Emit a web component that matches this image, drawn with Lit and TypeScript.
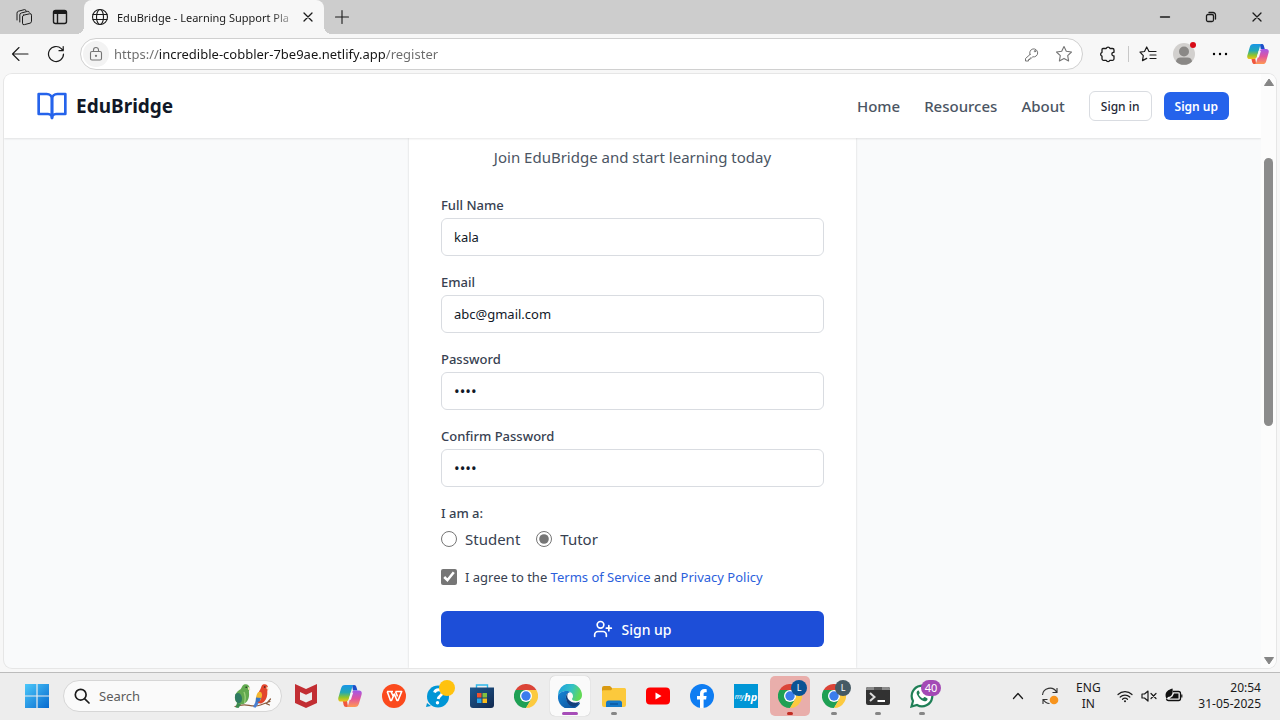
import { LitElement, html, css, svg } from "lit";
import { customElement, state } from "lit/decorators.js";
import { classMap } from "lit/directives/class-map.js";

const stroke = (size: number, body: unknown, width = 1, box = size) => html`<svg
  width=${size} height=${size} viewBox="0 0 ${box} ${box}" fill="none"
  stroke="currentColor" stroke-width=${width} stroke-linecap="round" stroke-linejoin="round"
  aria-hidden="true">${body}</svg>`;

const art = (size: number, body: unknown, box = 24) => html`<svg
  width=${size} height=${size} viewBox="0 0 ${box} ${box}" aria-hidden="true">${body}</svg>`;

const workspaces = stroke(18, svg`
  <path d="M8.500 7.200l6-1.400a1.500 1.500 0 0 1 2 1.400v6a2 2 0 0 1-1.500 2l-5.500 1.400a1.500 1.500 0 0 1-2-1.400V9a1.800 1.800 0 0 1 1-1.800z"/>
  <path d="M4.800 14V7a2 2 0 0 1 1.500-2l6.500-1.700a1.300 1.300 0 0 1 1.500 1M2 12V5.200a2 2 0 0 1 1.500-2l6-1.600a1.300 1.300 0 0 1 1.500 1"/>`);
const tabActions = stroke(18, svg`
  <rect x="2.500" y="2.500" width="13" height="13" rx="2"/><path d="M3.500 4.500h11" stroke-width="3"/><path d="M6.500 5v10" />`, 1.4);
const globe = stroke(18, svg`
  <circle cx="9" cy="9" r="7.500"/><ellipse cx="9" cy="9" rx="3.500" ry="7.500"/><path d="M2 6.500h14M2 11.500h14"/>`, 1.1);
const cross = stroke(12, svg`<path d="M2 2l8 8M10 2l-8 8"/>`, 1.3);
const plus = stroke(16, svg`<path d="M8 1.500v13M1.500 8h13"/>`, 1.1);
const minimize = stroke(12, svg`<path d="M1.500 6h9"/>`, 1.4);
const restore = stroke(12, svg`<rect x="1.500" y="3.500" width="7" height="7" rx="1.500"/><path d="M4 1.500h4a2.500 2.500 0 0 1 2.500 2.500v4"/>`, 1.3);
const back = stroke(18, svg`<path d="M17 9H1.500M8 2.500L1.500 9 8 15.500"/>`, 1.1);
const reload = stroke(18, svg`<path d="M16.500 9a7.500 7.500 0 1 1-2.200-5.300L16 5.500M16.200 1.500v4.200H12"/>`, 1.2);
const lock = stroke(16, svg`<rect x="2.500" y="5.500" width="11" height="8.500" rx="1.500"/><path d="M5.500 5.500V4a2.500 2.500 0 0 1 5 0v1.500"/><circle cx="8" cy="9.800" r=".6" fill="currentColor"/>`, 1.1);
const key = stroke(16, svg`<path d="M6 8.500a4 4 0 1 1 2.800 2.300L7.500 12H6v1.500H4.500V15H1.500v-2.500L6 8.500z"/><circle cx="11" cy="5.200" r=".7"/>`);
const star = stroke(18, svg`<path d="M9 1.500l2.300 4.800 5.200.7-3.800 3.600.9 5.300L9 13.400l-4.600 2.500.9-5.300L1.500 7l5.200-.7z"/>`, 1.1);
const puzzle = stroke(18, svg`<path d="M4 3.500h3.200a2 2 0 0 1 3.800 0h2.500a1.500 1.500 0 0 1 1.500 1.500v2.300h-.8a1.800 1.800 0 0 0 0 3.500h.8v3a1.500 1.500 0 0 1-1.500 1.500h-2.600a2 2 0 0 1-3.700 0H4.500A1.500 1.500 0 0 1 3 13.800v-2.700a2 2 0 0 1 0-3.800V4.500a1 1 0 0 1 1-1z"/>`, 1.3);
const favourites = stroke(18, svg`<path d="M10 6.500L7.700 2 5.500 6.500l-4.500.7 3.300 3.400-.8 5 4.200-2.200M10.500 6.500h6.500M11 10h6M11 13.500h6"/>`, 1.2);
const dots = art(18, svg`<circle cx="3" cy="9" r="1.200"/><circle cx="9" cy="9" r="1.200"/><circle cx="15" cy="9" r="1.200"/>`, 18);
const avatar = art(22, svg`<circle cx="11" cy="11" r="11" fill="#d2d0ce"/><circle cx="11" cy="8.500" r="5" fill="#8a8886"/><path d="M3 18.400q.5-4 4.500-4h7q4 0 4.500 4a11 11 0 0 1-16 0z" fill="#8a8886"/>`, 22);
const book = stroke(32, svg`<path d="M2 3h6a4 4 0 0 1 4 4v14a3 3 0 0 0-3-3H2z"/><path d="M22 3h-6a4 4 0 0 0-4 4v14a3 3 0 0 1 3-3h7z"/>`, 2, 24);
const userPlus = stroke(20, svg`<path d="M16 21v-2a4 4 0 0 0-4-4H6a4 4 0 0 0-4 4v2"/><circle cx="9" cy="7" r="4"/><path d="M19 8v6M22 11h-6"/>`, 2, 24);
const magnifier = stroke(16, svg`<circle cx="6.700" cy="6.700" r="5.400"/><path d="M10.800 10.800L15 15"/>`, 1.700);

const copilot = (size: number, id: string) => art(size, svg`
  <defs>
    <linearGradient id="${id}a" x1="0" y1="0" x2="0" y2="1"><stop offset="0" stop-color="#1995e8"/><stop offset=".45" stop-color="#22a9b5"/><stop offset=".75" stop-color="#8fc52d"/><stop offset="1" stop-color="#f3c21a"/></linearGradient>
    <linearGradient id="${id}b" x1="0" y1="0" x2="0" y2="1"><stop offset="0" stop-color="#a158ea"/><stop offset=".5" stop-color="#e2559b"/><stop offset="1" stop-color="#ff9a52"/></linearGradient>
  </defs>
  <path d="M14 1h2.200c1.200 0 1.800.7 2.200 2l1 3.500H15z" fill="#1d4fc9"/>
  <path d="M10 23H8c-1.200 0-2-.8-2.400-2.200L4.800 17H9z" fill="#f0563d"/>
  <path d="M7 1h9c-1.200.4-1.600 1.500-2 3l-3 10.500C10.400 16.600 9.500 17.500 7.500 17.500H3C.8 17.500-.2 16 .4 13.600L3 4.500C3.700 2 4.800 1 7 1z" fill="url(#${id}a)"/>
  <path d="M17 23H8.500c1.200-.4 1.600-1.500 2-3l3-10.500c.6-2.100 1.500-3 3.500-3h4c2.200 0 3.200 1.500 2.600 3.900L21 19.500c-.7 2.500-1.800 3.500-4 3.500z" fill="url(#${id}b)"/>
  <path d="M12.800 8.500h2.400l-2.300 7.200h-2.300z" fill="#f7f7f7"/>`);

const windowsLogo = art(24, svg`
  <defs><linearGradient id="win" x1="0" y1="0" x2="1" y2="1"><stop offset="0" stop-color="#4cc8fa"/><stop offset="1" stop-color="#0669cf"/></linearGradient></defs>
  <path d="M0 0h11.400v11.400H0zM12.600 0H24v11.400H12.600zM0 12.600h11.400V24H0zM12.600 12.600H24V24H12.600z" fill="url(#win)"/>`);

const parrots = html`<svg width="40" height="26" viewBox="0 0 40 26" aria-hidden="true">
  <path d="M2 23.500q7-2.500 14-1.200t11.500-.3 9.500-3.500M33 20.500l3.500 1.500M34 20l3.500-4" stroke="#8a5a3c" stroke-width="1.200" fill="none" stroke-linecap="round"/>
  <path d="M5 17l-2.500 7.500 3 .5 4-6z" fill="#3b8b4e"/>
  <path d="M11 1.500c3-1.200 5.800.8 5.500 4-.2 1.500-.8 2-.5 4.500.6 5-1.500 9.500-5.500 11-4 1-8-1-8.500-5C1.300 11.500 4 8 7.500 6.200 9 5 8.800 2.500 11 1.500z" fill="#62a94f"/>
  <path d="M2.500 11c3-2.500 6 0 6.500 4 .3 3-1 5-3 5.500-3-.8-5-4.500-3.500-9.500z" fill="#2f7a62"/>
  <path d="M11 9c1.500 3 1.500 7 .5 11" stroke="#9bd07a" stroke-width="1.300" fill="none"/>
  <path d="M15 4q2.800.5 2 3.500l-2-1z" fill="#efe0bb"/><circle cx="13.200" cy="4.200" r=".8" fill="#1d2a1d"/>
  <path d="M24.500 15l-4.500 9 2.500.8 5-7z" fill="#4a7fd0"/>
  <path d="M30 1.500c3-1 5.500.8 5 4-.3 1.500-.8 2-.7 4 .2 5.500-2.300 9.500-6 11-2.500.5-4.300-1-4.300-4 0-4.500 2-8 3.500-10.500.8-1.500.8-3.800 2.500-4.500z" fill="#e2452c"/>
  <path d="M24.500 10c2-2.500 5-1 4.500 3l-1.500 4.500-4.500.5c-.4-3 .3-6 1.500-8z" fill="#f4b62f"/>
  <path d="M23 14.500l5 .5-1.500 3.500-4 1z" fill="#3974c4"/>
  <path d="M33.500 3.500q2.800.5 2 3.500l-2-1z" fill="#f5e7c6"/><circle cx="31.700" cy="4" r=".8" fill="#2a1d1d"/></svg>`;

const mcafee = art(24, svg`<path d="M1 0l11 5 11-5v19l-11 5-11-5z" fill="#c22e33"/><path d="M6 8l6 2.700L18 8v7.700l-6 2.800-6-2.800z" fill="#ededed"/>`);
const wps = art(24, svg`<circle cx="12" cy="12" r="12" fill="#fb4a1d"/><path d="M5 7.500h6M5.200 7.500l3.300 9h1l2.800-6.500 2.700 6.500h1l3.700-9h-6.200M9 7.500l2.300 5M13.500 7.500l2 5" fill="none" stroke="#fff" stroke-width="1.600" stroke-linejoin="round"/>`);
const help = art(24, svg`<circle cx="12" cy="12.500" r="11" fill="#0096d6"/><path d="M1 19l-1 4 5-1z" fill="#0096d6"/><path d="M8.500 8.500q1-3 4.500-2.700t3 3.500c-.3 2.500-3.500 2.500-3.800 5.700" fill="none" stroke="#fff" stroke-width="2.800"/><circle cx="11.500" cy="18.800" r="1.700" fill="#fff"/>`);
const store = art(24, svg`<defs><linearGradient id="sto" x1="0" y1="0" x2="1" y2="1"><stop offset="0" stop-color="#1d5a91"/><stop offset="1" stop-color="#12294f"/></linearGradient></defs>
  <path d="M6.500 4V1h11v3" fill="none" stroke="#2db7ea" stroke-width="1.400"/><path d="M0 3.500h24V21a3 3 0 0 1-3 3H3a3 3 0 0 1-3-3z" fill="url(#sto)"/>
  <path d="M7 9h4.500v4.500H7z" fill="#f1512b"/><path d="M12.500 9H17v4.500h-4.500z" fill="#80c040"/><path d="M7 14.500h4.500V19H7z" fill="#2aa5ea"/><path d="M12.500 14.500H17V19h-4.500z" fill="#fbbc1b"/>`);
const chrome = art(24, svg`<path d="M12 12L1.600 6A12 12 0 0 1 22.400 6z" fill="#db4437"/><path d="M12 12L1.600 6A12 12 0 0 0 12 24l5.500-9z" fill="#1fa054"/><path d="M12 12l5.200 3L12 24A12 12 0 0 0 22.400 6H12z" fill="#fcca3f"/><path d="M1.600 6l5.200 9L12 6z" fill="#1fa054"/><circle cx="12" cy="12" r="6" fill="#fff"/><circle cx="12" cy="12" r="4.700" fill="#3b7ded"/>`);
const edge = art(24, svg`<defs>
  <linearGradient id="ed1" x1="0" y1="0" x2="1" y2=".3"><stop offset="0" stop-color="#1b9de2"/><stop offset=".6" stop-color="#35c1c5"/><stop offset="1" stop-color="#62d957"/></linearGradient>
  <linearGradient id="ed2" x1="0" y1="0" x2="1" y2="1"><stop offset="0" stop-color="#1686d6"/><stop offset="1" stop-color="#0d4b94"/></linearGradient></defs>
  <path d="M0 12a12 12 0 0 1 24-1c0 4-3 6-6 6-2.500 0-4-1-4-2 0-.7 1-1 1-2.800C15 9 12 7 8.500 7 4 7 .5 9.500 0 12z" fill="url(#ed1)"/>
  <path d="M0 12C.5 9.200 4 7 8.500 7c1.800 0 3.300.5 4.500 1.300C9.500 8 7.500 11 8 14.500c.7 4 5 6.500 9 6 2-.2 3.500-1 4.500-1.500l.6.600A12 12 0 0 1 0 12z" fill="url(#ed2)"/>
  <path d="M8 14.500c-.3-2.500.6-4.700 2.200-5.700-2.500 4.200.3 8.700 5.300 9.700 2.500.5 5-.3 6.500-1-1.500 3-4 4.800-7 5.300-3.600-1-6.600-4.300-7-8.300z" fill="#123f7c"/>`);
const folder = art(24, svg`<path d="M0 4a2 2 0 0 1 2-2h6l2.500 2.500V9H0z" fill="#d99a12"/><path d="M0 7.500q0-1.200 1.500-1.200H9L11 4h11.500Q24 4 24 5.500V21a2 2 0 0 1-2 2H2a2 2 0 0 1-2-2z" fill="#fcc93c"/><path d="M4 23v-4a2.500 2.500 0 0 1 2.500-2.500h11A2.500 2.500 0 0 1 20 19v4z" fill="#1579c8"/><path d="M8 20h8" stroke="#0b4f94" stroke-width="1.200"/>`);
const youtube = art(24, svg`<rect y="3.500" width="24" height="17" rx="4" fill="#f00"/><path d="M9.500 8.500v7l6-3.500z" fill="#fff"/>`);
const facebook = art(24, svg`<circle cx="12" cy="12" r="12" fill="#0f7df2"/><path d="M10 24v-8.500H7V12h3V9.500C10 6.500 11.800 5 14.400 5c1.200 0 2.300.2 2.300.2v3h-1.300c-1.300 0-1.800.8-1.800 1.600V12h3l-.5 3.500h-2.500V24z" fill="#fff"/>`);
const myhp = html`<span class="myhp"><small>my</small>hp</span>`;
const terminal = art(24, svg`<rect y="3" width="24" height="18" rx="2" fill="#323232"/><path d="M0 6V5a2 2 0 0 1 2-2h20a2 2 0 0 1 2 2v1z" fill="#8b8b8b"/><path d="M8 3h8v3H8z" fill="#5a5a5a"/><path d="M4 9l4.500 4L4 17" fill="none" stroke="#ddd" stroke-width="2"/><path d="M11.500 17H19" stroke="#fff" stroke-width="2"/>`);
const whatsapp = art(24, svg`<path d="M1.500 22.500l1.500-5.500a10.300 10.300 0 1 1 4 4z" fill="#fff" stroke="#1f7f56" stroke-width="2.200"/><path d="M8 6.500c-1.500.8-1.700 2.300-1 4 1.300 3 3.500 5.300 6.500 6.500 1.800.7 3.500.2 4-1.500.2-.8 0-1-.4-1.300l-2.200-1.100c-.5-.2-.8 0-1.100.4-.6.800-.9 1-1.500.7-1.500-.8-2.500-1.800-3.300-3.200-.3-.5 0-.8.300-1.200.5-.6.500-.8.3-1.300L8.800 6.800c-.2-.4-.5-.4-.8-.3z" fill="#1f7f56"/>`);

const chevron = stroke(12, svg`<path d="M1.500 8.500L6 3.500l4.500 5"/>`, 1.3);
const sync = html`<svg width="18" height="18" viewBox="0 0 18 18" fill="none" stroke="#333" stroke-width="1.100" aria-hidden="true"><path d="M1.500 8a7.500 7.500 0 0 1 14-3M16 1v4.500h-4.500M8.500 16.500a7.500 7.500 0 0 1-6-3.500M2 17v-4.500h4.500"/><circle cx="13" cy="13" r="4.300" fill="#f7941d" stroke="none"/></svg>`;
const wifi = stroke(16, svg`<path d="M1 6.500a10 10 0 0 1 14 0M3.200 9a7 7 0 0 1 9.600 0M5.500 11.300a3.700 3.700 0 0 1 5 0"/><circle cx="8" cy="13.300" r="1" fill="currentColor" stroke="none"/>`, 1.2);
const mute = stroke(16, svg`<path d="M1 6v4h2.500L7 13V3L3.500 6zM10 5.500l5 5M15 5.500l-5 5"/>`, 1.200);
const battery = art(18, svg`<path d="M8 4.500h5.500a2 2 0 0 1 2 2v5a2 2 0 0 1-2 2H3.500a2 2 0 0 1-2-1.500" fill="none" stroke="#111" stroke-width="1.300"/><path d="M16.200 7.500h1.200v3h-1.200zM9 6.500h4.500v5H4.500L7.500 9.500zM.8 10C-.2 6 2 3 7.500 1.500 8.300 6 7 9.500 3 10l-1.500 2z" fill="#111"/>`, 18);

interface Task { name: string; icon: unknown; mark?: "active" | "running" | "alert"; badge?: string; tone?: string; }

const tasks: Task[] = [
  { name: "McAfee", icon: mcafee },
  { name: "Copilot", icon: copilot(24, "ct") },
  { name: "WPS Office", icon: wps },
  { name: "HP Support", icon: help, badge: "", tone: "yellow" },
  { name: "Microsoft Store", icon: store },
  { name: "Chrome", icon: chrome },
  { name: "Edge", icon: edge, mark: "active" },
  { name: "File Explorer", icon: folder, mark: "running" },
  { name: "YouTube", icon: youtube },
  { name: "Facebook", icon: facebook },
  { name: "myHP", icon: myhp },
  { name: "Chrome profile 1", icon: chrome, mark: "alert", badge: "L", tone: "blue" },
  { name: "Chrome profile 2", icon: chrome, mark: "running", badge: "L", tone: "slate" },
  { name: "Terminal", icon: terminal, mark: "running" },
  { name: "WhatsApp", icon: whatsapp, mark: "running", badge: "40", tone: "purple" },
];

const reset = css`
  :host, *, *::before, *::after { box-sizing: border-box; }
  button, input { font: inherit; color: inherit; margin: 0; }
  button { border: 0; padding: 0; background: none; display: flex; align-items: center; justify-content: center; }
  svg { display: block; flex: none; }
  a { text-decoration: none; }
`;

@customElement("browser-chrome")
class BrowserChrome extends LitElement {
  static styles = [reset, css`
    :host { display: block; background: #f7f7f7; font-size: 11px; color: #1b1b1b; }
    .strip { display: flex; align-items: stretch; height: 34px; background: #cdcdcd; padding-left: 6px; }
    .tool { width: 36px; flex: none; }
    .tab { display: flex; align-items: center; gap: 8px; width: 240px; margin-left: 6px; padding: 0 8px 0 7px; background: #f7f7f7; border-radius: 8px 8px 0 0; position: relative; }
    .tab::before, .tab::after { content: ""; position: absolute; bottom: 0; width: 8px; height: 8px; }
    .tab::before { right: 100%; background: radial-gradient(circle at 0 0, #cdcdcd 8px, #f7f7f7 8px); }
    .tab::after { left: 100%; background: radial-gradient(circle at 100% 0, #cdcdcd 8px, #f7f7f7 8px); }
    .title { flex: 1; white-space: nowrap; -webkit-mask-image: linear-gradient(90deg, #000 88%, transparent 104%); mask-image: linear-gradient(90deg, #000 88%, transparent 104%); }
    .close { width: 16px; }
    .controls { display: flex; margin-left: auto; }
    .controls button { width: 46px; }
    .bar { display: flex; align-items: center; height: 40px; padding: 0 2px; }
    .address { flex: 1; display: flex; align-items: center; height: 32px; margin-left: 6px; padding: 0 2px; border: 1px solid #d0d0d0; border-radius: 16px; background: #fff; color: #757575; }
    .site { width: 26px; height: 26px; border-radius: 50%; background: #f3f3f3; flex: none; }
    .url { flex: 1; min-width: 0; border: 0; outline: 0; padding: 0 0 0 5px; font-size: 13px; color: transparent; background: linear-gradient(90deg, #6b6b6b 50px, #161616 50px, #161616 277px, #6b6b6b 277px); -webkit-background-clip: text; background-clip: text; }
    .address .tool { width: 32px; }
    .actions { display: flex; align-items: center; margin-left: 7px; }
    .divider { width: 1px; height: 16px; background: #c8c8c8; margin: 0 1px 0 2px; }
    .actions .wide { width: 40px; }
    .profile { position: relative; }
    .dot { position: absolute; top: -1px; right: 6px; width: 6px; height: 6px; border-radius: 50%; background: #d80b17; }
  `];

  render() {
    return html`
      <div class="strip">
        <button class="tool" aria-label="Workspaces">${workspaces}</button>
        <button class="tool" aria-label="Tab actions">${tabActions}</button>
        <div class="tab">
          ${globe}<span class="title">EduBridge - Learning Support Pla</span>
          <button class="close" aria-label="Close tab">${cross}</button>
        </div>
        <button class="tool" aria-label="New tab">${plus}</button>
        <div class="controls">
          <button aria-label="Minimize">${minimize}</button>
          <button aria-label="Restore">${restore}</button>
          <button aria-label="Close">${cross}</button>
        </div>
      </div>
      <div class="bar">
        <button class="tool" aria-label="Back">${back}</button>
        <button class="tool" aria-label="Reload">${reload}</button>
        <div class="address">
          <button class="site" aria-label="Site information">${lock}</button>
          <input class="url" aria-label="Address" .value=${"https://incredible-cobbler-7be9ae.netlify.app/register"} />
          <button class="tool" aria-label="Passwords">${key}</button>
          <button class="tool" aria-label="Add to favourites">${star}</button>
        </div>
        <div class="actions">
          <button class="tool" aria-label="Extensions">${puzzle}</button>
          <span class="divider"></span>
          <button class="tool" aria-label="Favourites">${favourites}</button>
          <button class="tool profile" aria-label="Profile">${avatar}<span class="dot"></span></button>
          <button class="tool" aria-label="More">${dots}</button>
          <button class="tool wide" aria-label="Copilot">${copilot(22, "cb")}</button>
        </div>
      </div>`;
  }
}

@customElement("register-page")
class RegisterPage extends LitElement {
  @state() private role = "tutor";

  static styles = [reset, css`
    :host { display: flex; min-height: 0; margin: 0 4px 4px; background: #f9fafb; border-radius: 8px; overflow: hidden; box-shadow: 0 0 0 1px #e6e6e6; color: #374151; }
    .view { flex: 1; display: flex; flex-direction: column; min-width: 0; overflow: hidden; }
    .top { display: flex; align-items: center; justify-content: space-between; height: 64px; flex: none; padding: 0 32px; background: #fff; box-shadow: 0 1px 2px rgba(0, 0, 0, .1); position: relative; }
    .brand { display: flex; align-items: center; gap: 8px; color: #111827; font-size: 19px; font-weight: 700; }
    .brand svg { color: #2563eb; }
    nav { display: flex; align-items: center; gap: 24px; }
    nav a { color: #4b5563; font-size: 15px; font-weight: 500; }
    .auth { display: flex; gap: 12px; align-items: center; font-size: 12px; font-weight: 600; }
    .auth button { height: 28px; padding: 0 11px; border-radius: 6px; }
    .auth .ghost { height: 30px; color: #1f2937; border: 1px solid #d9dce1; background: #fff; font-weight: 500; }
    .auth .solid { color: #fff; background: #2563eb; }
    .card { flex: 1; width: 100%; max-width: 447px; margin: 0 auto; padding: 7px 32px 0; background: #fff; box-shadow: 0 0 2px rgba(0, 0, 0, .16); }
    .lead { margin: 0 0 26px; text-align: center; font-size: 15px; line-height: 24px; color: #4b5563; }
    form { display: flex; flex-direction: column; gap: 16px; font-size: 14px; }
    .field { display: flex; flex-direction: column; gap: 3px; }
    .field label, legend { font-size: 13px; font-weight: 500; line-height: 20px; padding: 0; }
    .field input { height: 38px; width: 100%; padding: 0 12px; border: 1px solid #d9dce1; border-radius: 6px; background: #fff; color: #111827; font-size: 13px; outline: 0; }
    .field input[type="password"] { font-size: 15px; }
    fieldset { border: 0; margin: 0; padding: 0; }
    .roles { display: flex; gap: 16px; padding-top: 4px; }
    .roles label, .terms { display: flex; align-items: center; gap: 8px; }
    .roles label { font-size: 15px; line-height: 24px; }
    .roles input, .terms input { width: 16px; height: 16px; accent-color: #767676; flex: none; }
    .terms { font-size: 13px; line-height: 20px; }
    .terms a { color: #2c5fdc; }
    .submit { gap: 8px; height: 36px; margin-top: 8px; border-radius: 6px; background: #1d4ed8; color: #fff; font-size: 14px; font-weight: 500; }
    .scroll { width: 15px; flex: none; display: flex; flex-direction: column; align-items: center; background: #fcfcfc; padding: 4px 0 3px; }
    .thumb { width: 9px; height: 268px; border-radius: 5px; background: #8b8b8b; margin-top: 72px; margin-bottom: auto; }
  `];

  private field(id: string, label: string, type: string, value: string) {
    return html`<div class="field"><label for=${id}>${label}</label><input id=${id} type=${type} .value=${value} /></div>`;
  }

  private option(id: string, label: string) {
    return html`<label><input type="radio" name="role" .checked=${this.role === id} @change=${() => (this.role = id)} />${label}</label>`;
  }

  render() {
    return html`
      <div class="view">
        <header class="top">
          <a class="brand" href="#">${book}<span>EduBridge</span></a>
          <nav>
            <a href="#">Home</a><a href="#">Resources</a><a href="#">About</a>
            <div class="auth"><button class="ghost">Sign in</button><button class="solid">Sign up</button></div>
          </nav>
        </header>
        <main class="card">
          <p class="lead">Join EduBridge and start learning today</p>
          <form @submit=${(e: Event) => e.preventDefault()}>
            ${this.field("name", "Full Name", "text", "kala")}
            ${this.field("email", "Email", "email", "abc@gmail.com")}
            ${this.field("password", "Password", "password", "abcd")}
            ${this.field("confirm", "Confirm Password", "password", "abcd")}
            <fieldset>
              <legend>I am a:</legend>
              <div class="roles">${this.option("student", "Student")}${this.option("tutor", "Tutor")}</div>
            </fieldset>
            <div class="terms">
              <input id="terms" type="checkbox" checked />
              <label for="terms">I agree to the <a href="#">Terms of Service</a> and <a href="#">Privacy Policy</a></label>
            </div>
            <button class="submit">${userPlus}Sign up</button>
          </form>
        </main>
      </div>
      <div class="scroll" aria-hidden="true">
        <svg width="10" height="8" viewBox="0 0 10 8"><path d="M5 1l4.500 6.500h-9z" fill="#858585" stroke="#858585" stroke-linejoin="round"/></svg>
        <span class="thumb"></span>
        <svg width="10" height="8" viewBox="0 0 10 8"><path d="M5 7L.5.500h9z" fill="#858585" stroke="#858585" stroke-linejoin="round"/></svg>
      </div>`;
  }
}

@customElement("task-bar")
class TaskBar extends LitElement {
  static styles = [reset, css`
    :host { display: flex; align-items: center; height: 48px; padding: 0 19px 0 15px; background: #ededed; box-shadow: inset 0 1px #bcbcbc; color: #1b1b1b; font-size: 12px; }
    .start, .task { width: 44px; height: 40px; flex: none; }
    .search { display: flex; align-items: center; gap: 9px; width: 219px; height: 32px; margin: 0 2px 0 4px; padding: 0 8px 0 10px; border: 1px solid #d6d6d6; border-radius: 16px; background: #fafafa; }
    .search input { flex: 1; min-width: 0; border: 0; outline: 0; padding: 0; background: none; font-size: 13px; }
    .search input::placeholder { color: #5c5c5c; opacity: 1; }
    .task { position: relative; padding: 0 2px; }
    .plate { display: flex; align-items: center; justify-content: center; width: 40px; height: 40px; border-radius: 5px; }
    .active .plate { background: #fafafa; box-shadow: 0 0 1px rgba(0, 0, 0, .3); }
    .alert .plate { background: #e9aeab; }
    .mark { position: absolute; bottom: 1px; left: 50%; width: 6px; height: 3px; margin-left: -3px; border-radius: 2px; background: #868686; }
    .active .mark { width: 16px; margin-left: -8px; background: #a64db8; }
    .alert .mark { background: #c22b22; }
    .badge { position: absolute; top: 4px; right: 5px; min-width: 16px; height: 16px; border-radius: 8px; font-size: 9px; line-height: 16px; color: #fff; text-align: center; }
    .yellow { background: #ffc20e; }
    .blue { background: #0b5394; }
    .slate { background: #455a64; }
    .purple { background: #a349b5; font-size: 11px; min-width: 20px; right: 3px; }
    .myhp { display: flex; align-items: center; justify-content: center; width: 24px; height: 24px; background: #0096d6; color: #fff; font-size: 11px; font-weight: 700; font-style: italic; }
    .myhp small { font-size: 7px; font-weight: 400; }
    .tray { display: flex; align-items: center; margin-left: auto; }
    .tray button { width: 32px; height: 40px; }
    .tray .lang { display: block; width: 44px; line-height: 16px; }
    .tray .quick { width: 80px; gap: 8px; }
    .clock { line-height: 16px; text-align: right; margin-left: 8px; }
  `];

  render() {
    return html`
      <button class="start" aria-label="Start">${windowsLogo}</button>
      <label class="search">${magnifier}<input type="search" placeholder="Search" aria-label="Search" />${parrots}</label>
      ${tasks.map((t) => html`
        <button class=${classMap({ task: true, active: t.mark === "active", alert: t.mark === "alert" })} aria-label=${t.name}>
          <span class="plate">${t.icon}</span>
          ${t.badge !== undefined ? html`<span class="badge ${t.tone}">${t.badge}</span>` : ""}
          ${t.mark ? html`<span class="mark"></span>` : ""}
        </button>`)}
      <div class="tray">
        <button aria-label="Hidden icons">${chevron}</button>
        <button aria-label="Update">${sync}</button>
        <button class="lang">ENG<br />IN</button>
        <button class="quick" aria-label="Quick settings">${wifi}${mute}${battery}</button>
        <div class="clock">20:54<br />31-05-2025</div>
      </div>`;
  }
}

@customElement("app-root")
class AppRoot extends LitElement {
  static styles = css`
    :host { display: grid; grid-template-rows: auto minmax(0, 1fr) auto; height: 100vh; overflow: hidden; background: #f7f7f7; font-family: "Noto Sans", "Open Sans", sans-serif; }
  `;

  render() {
    return html`<browser-chrome></browser-chrome><register-page></register-page><task-bar></task-bar>`;
  }
}
